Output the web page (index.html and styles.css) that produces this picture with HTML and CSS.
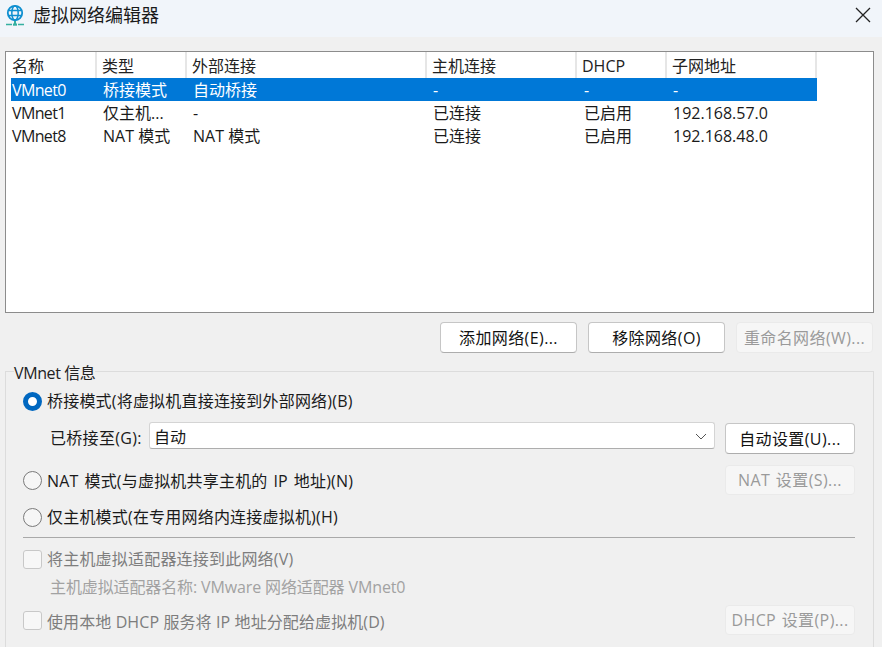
FILE: index.html
```html
<!DOCTYPE html>
<html lang="zh-CN">
<head>
<meta charset="utf-8">
<title>虚拟网络编辑器</title>
<link rel="stylesheet" href="styles.css">
</head>
<body>
<div class="window">
  <header class="titlebar">
    <svg class="app-icon" width="20" height="22" viewBox="0 0 20 22" fill="none">
      <circle cx="10" cy="9" r="7.2" stroke="#0f8fd0" stroke-width="1.8"/>
      <ellipse cx="10" cy="9" rx="3.2" ry="7.2" stroke="#0f8fd0" stroke-width="1.5"/>
      <path d="M3 6.5h14M3 11.5h14" stroke="#0f8fd0" stroke-width="1.5"/>
      <path d="M10 17v3" stroke="#35b0a0" stroke-width="2"/>
      <path d="M1 20.5h6M13 20.5h6" stroke="#35b0a0" stroke-width="1.4"/>
      <rect x="8" y="19.5" width="4" height="2.2" fill="#35b0a0"/>
    </svg>
    <span class="title">虚拟网络编辑器</span>
    <svg class="close" width="16" height="16" viewBox="0 0 16 16" fill="none">
      <path d="M1 1l14 14M15 1L1 15" stroke="#222" stroke-width="1.3"/>
    </svg>
  </header>

  <main class="content">
    <section class="list">
      <div class="row head">
        <span>名称</span><span>类型</span><span>外部连接</span><span>主机连接</span><span>DHCP</span><span>子网地址</span>
      </div>
      <div class="row item selected">
        <span>VMnet0</span><span>桥接模式</span><span>自动桥接</span><span>-</span><span>-</span><span>-</span>
      </div>
      <div class="row item">
        <span>VMnet1</span><span>仅主机...</span><span>-</span><span>已连接</span><span>已启用</span><span>192.168.57.0</span>
      </div>
      <div class="row item">
        <span>VMnet8</span><span>NAT 模式</span><span>NAT 模式</span><span>已连接</span><span>已启用</span><span>192.168.48.0</span>
      </div>
    </section>

    <div class="list-actions">
      <button class="btn wide">添加网络(E)...</button>
      <button class="btn wide">移除网络(O)</button>
      <button class="btn wide disabled">重命名网络(W)...</button>
    </div>

    <fieldset class="group">
      <legend>VMnet 信息</legend>

      <div class="line radio-first">
        <span class="radio on"></span><span class="label">桥接模式(将虚拟机直接连接到外部网络)(B)</span>
      </div>

      <div class="bridge">
        <span class="bridge-label">已桥接至(G):</span>
        <div class="combo">
          <span>自动</span>
          <svg width="12" height="7" viewBox="0 0 12 7" fill="none"><path d="M1 1l5 5 5-5" stroke="#555" stroke-width="1"/></svg>
        </div>
        <button class="btn side">自动设置(U)...</button>
      </div>

      <div class="line spread nat">
        <div class="line-main"><span class="radio"></span><span class="label nat-label">NAT 模式(与虚拟机共享主机的 IP 地址)(N)</span></div>
        <button class="btn side disabled">NAT 设置(S)...</button>
      </div>

      <div class="line host">
        <span class="radio"></span><span class="label">仅主机模式(在专用网络内连接虚拟机)(H)</span>
      </div>

      <hr class="sep">

      <div class="line muted adapter">
        <span class="check"></span><span class="label">将主机虚拟适配器连接到此网络(V)</span>
      </div>
      <div class="adapter-name">主机虚拟适配器名称: VMware 网络适配器 VMnet0</div>

      <div class="line spread muted dhcp">
        <div class="line-main"><span class="check"></span><span class="dhcp-label">使用本地 DHCP 服务将 IP 地址分配给虚拟机(D)</span></div>
        <button class="btn side disabled">DHCP 设置(P)...</button>
      </div>
    </fieldset>
  </main>
</div>
</body>
</html>
```
FILE: styles.css
```css
* { box-sizing: border-box; }

html, body {
  margin: 0;
  height: 647px;
  overflow: hidden;
}

body {
  background: #f0f0f0;
  color: #1a1a1a;
  font: 16px/22px "Open Sans", "Noto Sans CJK SC", sans-serif;
}

.window { width: 882px; }

.titlebar {
  height: 37px;
  background: #f1f5fa;
  display: flex;
  align-items: center;
  padding: 0 11px 8px 5px;
}

.app-icon { flex: none; }

.title {
  margin-left: 8px;
  font-size: 18px;
  color: #1a1a1a;
}

.close { margin-left: auto; }

.content { padding: 14px 8px 0 5px; }

.list {
  height: 262px;
  background: #fff;
  border: 1px solid #8c8c8c;
  padding-left: 5px;
}

.row {
  display: grid;
  grid-template-columns: 86px 90px 240px 150px 90px 150px;
  width: 806px;
}

.row > span { padding-left: 1px; white-space: nowrap; }

.head { height: 26px; color: #222; }

.head > span {
  height: 26px;
  padding-top: 2px;
  line-height: 25px;
  border-right: 2px solid #e6e6e6;
}

.head > span:nth-child(n+2) { padding-left: 5px; }

.item { height: 23px; line-height: 23px; }
.item > span { padding-top: 1px; }
.item > span:first-child { letter-spacing: -0.65px; }
.item > span:nth-child(n+2) { padding-left: 6px; }
.item > span:nth-child(5) { padding-left: 7px; }

.selected { background: #0078d7; color: #fff; }

.list-actions {
  display: flex;
  justify-content: flex-end;
  gap: 11px;
  padding: 9px 1px 0 0;
}

.btn {
  font: inherit;
  letter-spacing: 0.4px;
  word-spacing: 1px;
  color: #111;
  background: #fff;
  border: 1px solid #c6c6c6;
  border-bottom-color: #adadad;
  border-radius: 4px;
  padding: 0;
  white-space: nowrap;
}

.btn.disabled {
  background: #f6f6f6;
  border-color: #eaeaea;
  color: #9a9a9a;
}

.btn.wide { width: 137px; height: 31px; }
.btn.side { width: 130px; height: 31px; flex: none; }
.btn.side.disabled { height: 30px; }

.group {
  margin: 6px 0 0;
  padding: 0 18px 0 17px;
  height: 300px;
  border: 1px solid #dcdcdc;
  border-bottom: 0;
  min-width: 0;
}

.group legend {
  margin-left: -9px;
  padding: 4px 0 0;
  line-height: 20px;
  letter-spacing: -0.4px;
  color: #222;
}

.line {
  display: flex;
  align-items: center;
  gap: 5px;
  height: 22px;
  white-space: nowrap;
}

.line-main {
  display: flex;
  align-items: center;
  gap: 5px;
}

.label { letter-spacing: 0.2px; }
.nat-label { word-spacing: 1.5px; padding-top: 2px; }
.dhcp-label { letter-spacing: 0.1px; padding-top: 3px; }

.spread { justify-content: space-between; }

.radio-first { margin-top: 7px; }

.radio, .check { flex: none; width: 19px; height: 19px; }

.radio {
  border-radius: 50%;
  border: 1px solid #7a7a7a;
  background: #f6f6f6;
}

.radio.on {
  border: 5px solid #0067c0;
  background: #fff;
}

.check {
  border: 1px solid #c8c8c8;
  border-radius: 3px;
  background: #f7f7f7;
}

.bridge {
  display: flex;
  align-items: flex-start;
  margin-top: 10px;
  padding-left: 27px;
}

.bridge-label {
  width: 99px;
  flex: none;
  line-height: 33px;
  letter-spacing: 0.3px;
  white-space: nowrap;
}

.combo {
  width: 566px;
  height: 27px;
  background: #fff;
  border: 1px solid #d4d4d4;
  border-bottom-color: #adadad;
  border-radius: 3px;
  display: flex;
  align-items: center;
  justify-content: space-between;
  padding: 2px 7px 0 4px;
  margin-right: 10px;
  flex: none;
}

.bridge .btn { margin-top: 1px; }

.nat { margin-top: 10px; height: 30px; }
.host { margin-top: 11px; }

.sep {
  margin: 9px 0 0;
  border: 0;
  border-top: 1px solid #a9a9a9;
}

.muted { color: #7d7d7d; }

.adapter { margin-top: 10px; }

.adapter-name {
  margin-top: 6px;
  padding-left: 27px;
  color: #a2a2a2;
  letter-spacing: -0.12px;
}

.dhcp { margin-top: 7px; height: 30px; }
```
